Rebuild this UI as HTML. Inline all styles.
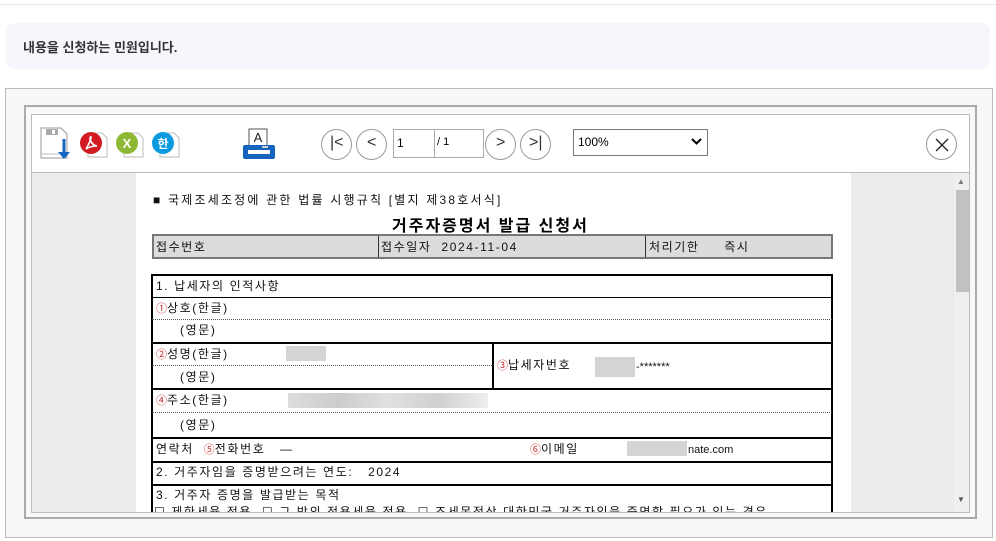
<!DOCTYPE html>
<html><head><meta charset="utf-8">
<style>
*{margin:0;padding:0;box-sizing:border-box}
body{width:996px;height:541px;background:#fff;position:relative;overflow:hidden;font-family:"Liberation Sans","Noto Sans CJK KR",sans-serif}
.a{position:absolute}
.f{font-family:"Liberation Sans","Noto Sans CJK KR",sans-serif;font-size:12px;color:#111;white-space:nowrap;line-height:14px;letter-spacing:1.6px}
.hl{position:absolute;height:0;border-top:1px solid #000}
.dl{position:absolute;height:0;border-top:1px dotted #555}
.c{font-size:11px;color:#c33;letter-spacing:0}
.circ{position:absolute;width:31px;height:31px;border:1px solid #999;border-radius:50%;background:#fff}
.g{position:absolute;background:#d4d4d4;height:15px}
</style></head><body>
<div class="a" style="left:0;top:4px;width:996px;border-top:1px solid #e6e6e6"></div>
<div class="a" style="left:6px;top:23px;width:984px;height:46px;background:#f5f7fc;border-radius:8px"></div>
<div class="a" style="left:23px;top:37px;font-size:13px;font-weight:bold;color:#333">내용을 신청하는 민원입니다.</div>

<div class="a" style="left:5px;top:88px;width:988px;height:450px;background:#f8f8f8;border:1px solid #bbb"></div>
<div class="a" style="left:24px;top:105px;width:953px;height:414px;border:2px solid #aaa"></div>
<div class="a" style="left:31px;top:114px;width:939px;height:59px;background:#fff;border:1px solid #bbb"></div>
<div class="a" style="left:31px;top:173px;width:939px;height:340px;background:#ececec;border:1px solid #bbb;border-top:none;overflow:hidden">
 <div class="a" style="left:104px;top:0;width:715px;height:340px;background:#fff"></div>
 <div class="a" style="left:922px;top:0;width:16px;height:340px;background:#efefef"></div>
 <div class="a" style="left:925px;top:4px;font-size:8px;color:#777">▲</div>
 <div class="a" style="left:924px;top:17px;width:14px;height:102px;background:#c1c1c1"></div>
 <div class="a" style="left:925px;top:322px;font-size:8px;color:#555">▼</div>
</div>

<svg class="a" style="left:38px;top:126px" width="36" height="36" viewBox="0 0 36 36">
 <path d="M3 2h20l6 6v24H3z" fill="#fff" stroke="#999"/><rect x="8" y="3" width="12" height="6" fill="#aaa"/><rect x="14" y="4" width="3" height="4" fill="#fff"/>
 <path d="M3 28h18" stroke="#bbb"/>
 <path d="M26 13v17" stroke="#1565c0" stroke-width="3"/><path d="M20 26l6 7 6-7z" fill="#1565c0"/>
</svg>
<svg class="a" style="left:78px;top:128px" width="32" height="32" viewBox="0 0 32 32"><path d="M10 5h14l5 5v19H10z" fill="#fff" stroke="#bbb"/><circle cx="13" cy="15" r="11" fill="#d21c22"/><path d="M8 21c3-5 5-10 5-12 0-1-1 0-1 2 1 4 4 7 7 7-4 0-8 1-11 3z" fill="none" stroke="#fff" stroke-width="1.6"/></svg>
<svg class="a" style="left:114px;top:128px" width="32" height="32" viewBox="0 0 32 32"><path d="M10 5h14l5 5v19H10z" fill="#fff" stroke="#bbb"/><circle cx="13" cy="15" r="11" fill="#8cb834"/><text x="13" y="20" font-size="13" font-weight="bold" fill="#fff" text-anchor="middle" font-family="Liberation Sans">X</text></svg>
<svg class="a" style="left:150px;top:128px" width="32" height="32" viewBox="0 0 32 32"><path d="M10 5h14l5 5v19H10z" fill="#fff" stroke="#bbb"/><circle cx="13" cy="15" r="11" fill="#0d9be0"/><text x="13" y="20" font-size="12" font-weight="bold" fill="#fff" text-anchor="middle" font-family="Noto Sans CJK KR">한</text></svg>
<svg class="a" style="left:242px;top:127px" width="34" height="34" viewBox="0 0 34 34"><rect x="7" y="2" width="18" height="18" fill="#fff" stroke="#555"/><text x="16" y="15" font-size="13" text-anchor="middle" font-family="Liberation Sans" fill="#222">A</text><rect x="1" y="18" width="32" height="14" rx="2" fill="#1565c0"/><rect x="6" y="23" width="22" height="4" fill="#fff"/><rect x="20" y="19" width="6" height="2" fill="#ccc"/></svg>

<div class="circ" style="left:321px;top:129px"></div><div class="a" style="left:330px;top:134px;font-size:16px;color:#333">|&lt;</div>
<div class="circ" style="left:356px;top:129px"></div><div class="a" style="left:367px;top:134px;font-size:16px;color:#333">&lt;</div>
<div class="a" style="left:393px;top:129px;width:42px;height:29px;border:1px solid #aaa;background:#fff"></div><div class="a" style="left:397px;top:136px;font-size:12px">1</div>
<div class="a" style="left:435px;top:129px;width:49px;height:29px;border:1px solid #aaa;border-left:none;background:#fff"></div><div class="a" style="left:437px;top:136px;font-size:11px">/ 1</div>
<div class="circ" style="left:485px;top:129px"></div><div class="a" style="left:496px;top:134px;font-size:16px;color:#333">&gt;</div>
<div class="circ" style="left:520px;top:129px"></div><div class="a" style="left:529px;top:134px;font-size:16px;color:#333">&gt;|</div>
<div class="a" style="left:573px;top:129px;width:135px;height:27px;border:1px solid #777;background:#fff"></div>
<div class="a" style="left:578px;top:135px;font-size:12px;color:#000">100%</div>
<svg class="a" style="left:691px;top:138px" width="11" height="8"><path d="M1 1l4.5 4.5L10 1" stroke="#000" stroke-width="2" fill="none"/></svg>
<div class="circ" style="left:926px;top:129px"></div>
<svg class="a" style="left:934px;top:137px" width="16" height="16"><path d="M2 2l12 12M14 2L2 14" stroke="#222" stroke-width="1.3"/></svg>

<div class="a f" style="left:153px;top:193px;letter-spacing:2.2px">■ 국제조세조정에 관한 법률 시행규칙 [별지 제38호서식]</div>
<div class="a" style="left:392px;top:212px;font-size:16px;font-weight:bold;color:#000;letter-spacing:2px;font-family:'Liberation Sans','Noto Sans CJK KR',sans-serif">거주자증명서 발급 신청서</div>
<div class="a" style="left:152px;top:234px;width:681px;height:25px;background:#dcdcdc;border:2px solid #777"></div>
<div class="a" style="left:378px;top:236px;width:1px;height:21px;background:#333"></div>
<div class="a" style="left:645px;top:236px;width:1px;height:21px;background:#333"></div>
<div class="a f" style="left:156px;top:240px">접수번호</div>
<div class="a f" style="left:381px;top:240px">접수일자 &nbsp;2024-11-04</div>
<div class="a f" style="left:649px;top:240px">처리기한 &nbsp; &nbsp; 즉시</div>

<div class="a" style="left:151px;top:274px;width:682px;height:238px;border:2px solid #000;border-bottom:none"></div>
<div class="hl" style="left:152px;top:297px;width:680px"></div>
<div class="dl" style="left:152px;top:319px;width:680px"></div>
<div class="hl" style="left:152px;top:342px;width:680px;border-top-width:2px"></div>
<div class="dl" style="left:152px;top:365px;width:340px"></div>
<div class="a" style="left:492px;top:342px;width:2px;height:47px;background:#000"></div>
<div class="hl" style="left:152px;top:388px;width:680px;border-top-width:2px"></div>
<div class="dl" style="left:152px;top:412px;width:680px"></div>
<div class="hl" style="left:152px;top:437px;width:680px;border-top-width:2px"></div>
<div class="hl" style="left:152px;top:461px;width:680px;border-top-width:2px"></div>
<div class="hl" style="left:152px;top:484px;width:680px;border-top-width:2px"></div>

<div class="a f" style="left:156px;top:279px">1. 납세자의 인적사항</div>
<div class="a f" style="left:156px;top:301px"><span class="c">①</span>상호(한글)</div>
<div class="a f" style="left:180px;top:323px">(영문)</div>
<div class="a f" style="left:156px;top:347px"><span class="c">②</span>성명(한글)</div>
<div class="g" style="left:286px;top:346px;width:40px"></div>
<div class="a f" style="left:180px;top:370px">(영문)</div>
<div class="a f" style="left:497px;top:358px"><span class="c">③</span>납세자번호</div>
<div class="g" style="left:595px;top:357px;width:40px;height:20px"></div>
<div class="a f" style="left:636px;top:360px;font-size:11px;letter-spacing:0">-*******</div>
<div class="a f" style="left:156px;top:393px"><span class="c">④</span>주소(한글)</div>
<div class="g" style="left:288px;top:393px;width:200px;background:linear-gradient(90deg,#ddd,#ccc,#e0e0e0,#d0d0d0,#eee)"></div>
<div class="a f" style="left:180px;top:418px">(영문)</div>
<div class="a f" style="left:156px;top:442px">연락처 &nbsp;<span class="c">⑤</span>전화번호 &nbsp; —</div>
<div class="a f" style="left:530px;top:442px"><span class="c">⑥</span>이메일</div>
<div class="g" style="left:627px;top:441px;width:60px"></div>
<div class="a f" style="left:688px;top:443px;font-size:11px;letter-spacing:0">nate.com</div>
<div class="a f" style="left:156px;top:465px">2. 거주자임을 증명받으려는 연도: &nbsp; 2024</div>
<div class="a f" style="left:156px;top:488px">3. 거주자 증명을 발급받는 목적</div>
<div class="a" style="left:152px;top:505px;width:680px;height:7px;overflow:hidden">
 <div class="a f" style="left:2px;top:0">☐ 제한세율 적용 &nbsp;☐ 그 밖의 적용세율 적용 &nbsp;☐ 조세목적상 대한민국 거주자임을 증명할 필요가 있는 경우</div>
</div>
</body></html>
